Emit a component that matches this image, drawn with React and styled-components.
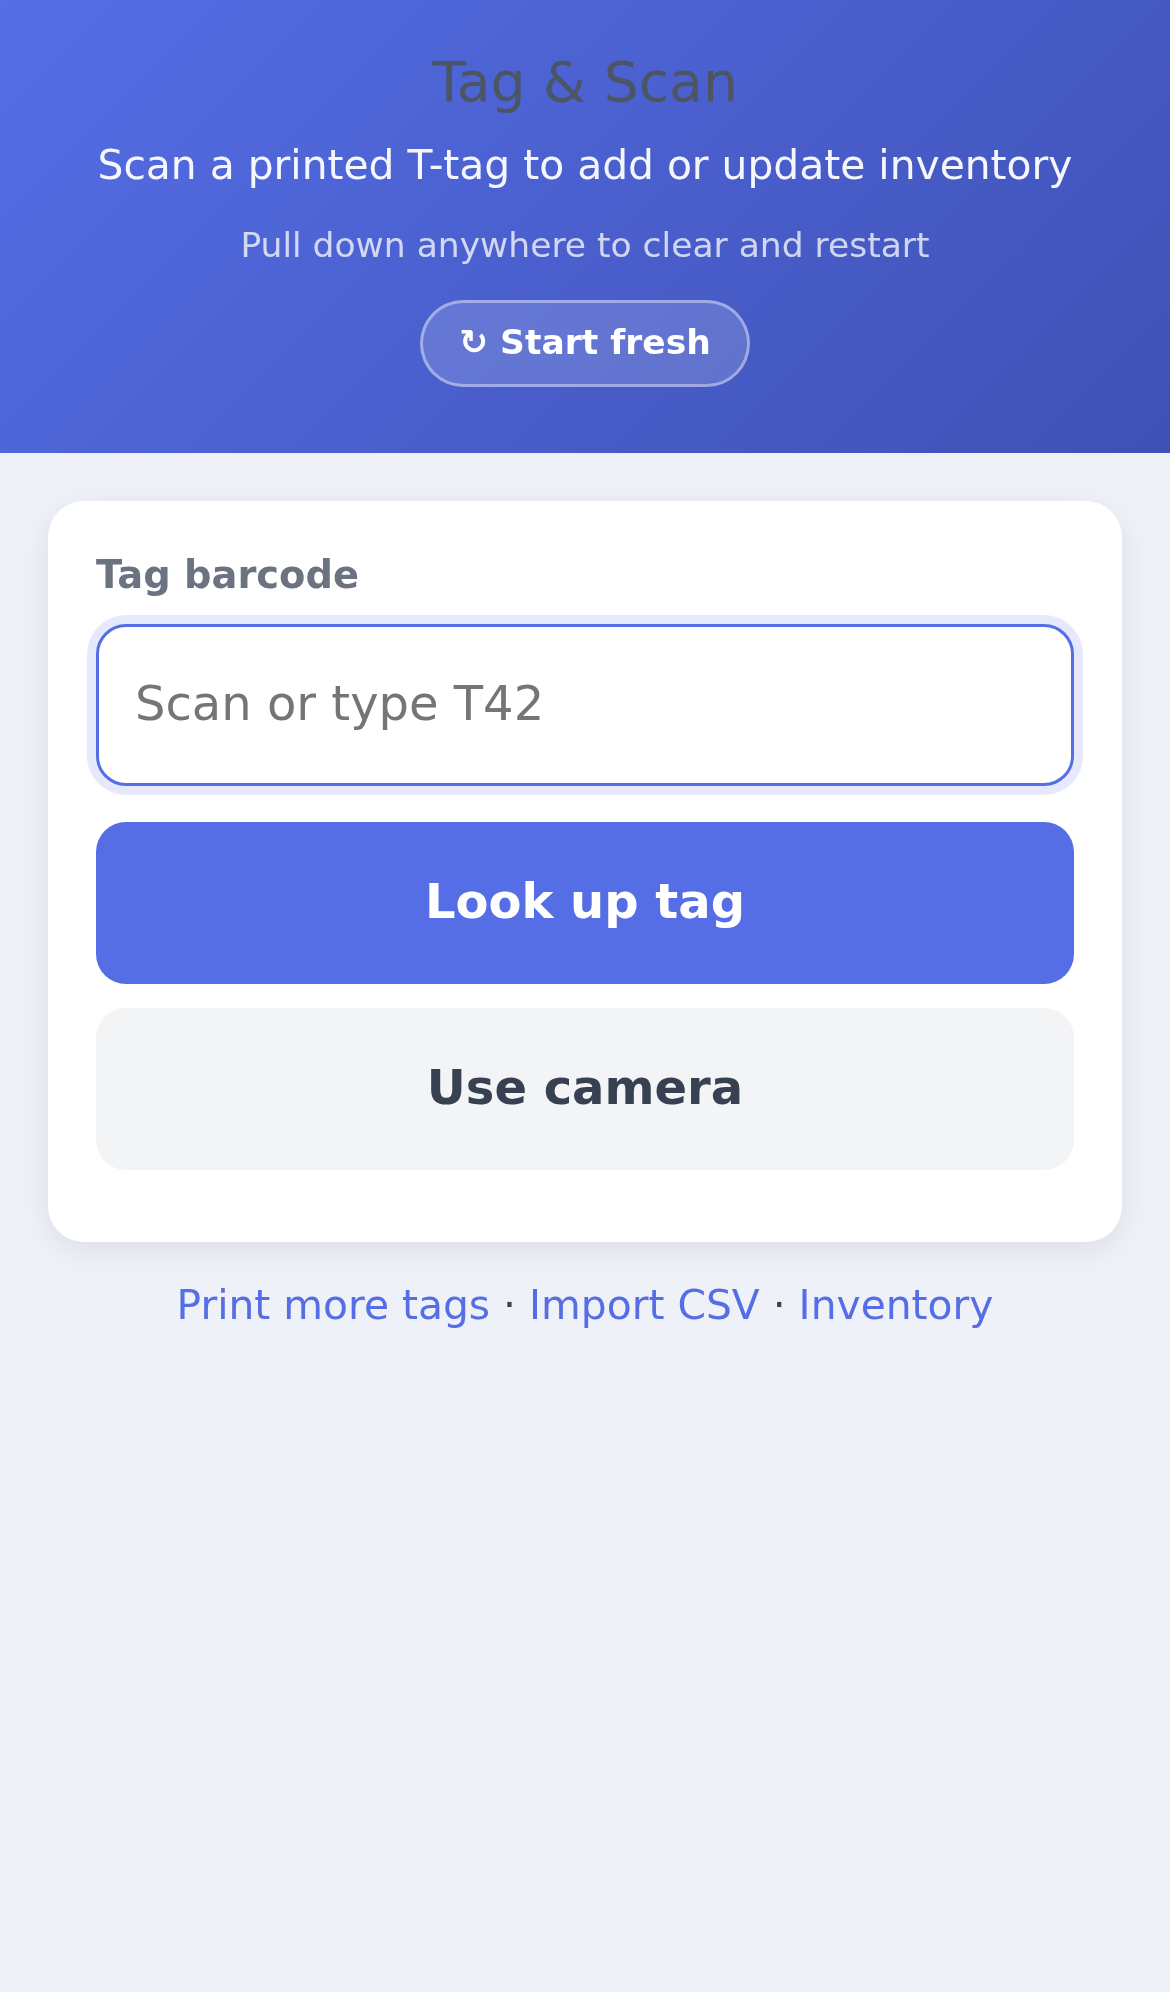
import React from 'react';
import styled, { createGlobalStyle } from 'styled-components';

const GlobalStyle = createGlobalStyle`
  * { box-sizing: border-box; }
  html, body { margin: 0; padding: 0; }
  body {
    background: #eef1f8;
    font-family: "DejaVu Sans", sans-serif;
    min-height: 1992px;
  }
  #root { will-change: transform; }
`;

const Header = styled.header`
  height: 453px;
  padding: 46px 24px 0;
  background: linear-gradient(135deg, #556ee6 0%, #3f51b5 100%);
  text-align: center;
  color: #fff;
`;

const Title = styled.h1`
  margin: 0 0 20px;
  font-size: 55.2px;
  line-height: 72px;
  font-weight: 400;
  color: #4b5563;
`;

const Subtitle = styled.p`
  margin: 0 0 29px;
  font-size: 40.8px;
  line-height: 54px;
  opacity: 0.95;
`;

const Hint = styled.p`
  margin: 0 0 31px;
  font-size: 34.5px;
  line-height: 48px;
  opacity: 0.75;
`;

const FreshButton = styled.button`
  height: 87px;
  padding: 0 36px 4px;
  border: 3px solid rgba(255, 255, 255, 0.4);
  border-radius: 45px;
  background: rgba(255, 255, 255, 0.15);
  color: #fff;
  font-family: inherit;
  font-size: 34.5px;
  font-weight: 700;
`;

const Main = styled.main`
  padding: 48px;
`;

const Card = styled.section`
  display: flex;
  flex-direction: column;
  padding: 48px 48px 72px;
  background: #fff;
  border-radius: 36px;
  box-shadow: 0 8px 32px rgba(0, 0, 0, 0.08);
`;

const Label = styled.label`
  margin-bottom: 24px;
  font-size: 38.4px;
  line-height: 51px;
  font-weight: 700;
  color: #6b7280;
`;

const Input = styled.input`
  width: 100%;
  height: 162px;
  margin-bottom: 36px;
  padding: 0 36px 5px;
  border: 3px solid #556ee6;
  border-radius: 30px;
  outline: none;
  box-shadow: 0 0 0 9px rgba(85, 110, 230, 0.15);
  font-family: inherit;
  font-size: 48px;
  &::placeholder { color: #757575; opacity: 1; }
`;

const ActionButton = styled.button`
  height: 162px;
  margin-top: ${(p) => (p.$secondary ? '24px' : '0')};
  padding: 0 0 5px;
  border: 0;
  border-radius: 30px;
  background: ${(p) => (p.$secondary ? '#f3f4f6' : '#556ee6')};
  color: ${(p) => (p.$secondary ? '#374151' : '#fff')};
  font-family: inherit;
  font-size: 48px;
  font-weight: 700;
`;

const Links = styled.nav`
  margin-top: 36px;
  text-align: center;
  font-size: 40.8px;
  line-height: 54px;
  color: #374151;
`;

const NavLink = styled.a`
  color: #556ee6;
  text-decoration: none;
`;

const App = () => (
  <>
    <GlobalStyle />
    <Header>
      <Title>Tag &amp; Scan</Title>
      <Subtitle>Scan a printed T-tag to add or update inventory</Subtitle>
      <Hint>Pull down anywhere to clear and restart</Hint>
      <FreshButton type="button">↻ Start fresh</FreshButton>
    </Header>
    <Main>
      <Card>
        <Label htmlFor="tag">Tag barcode</Label>
        <Input id="tag" placeholder="Scan or type T42" />
        <ActionButton type="button">Look up tag</ActionButton>
        <ActionButton type="button" $secondary>Use camera</ActionButton>
      </Card>
      <Links>
        <NavLink href="#print">Print more tags</NavLink> · <NavLink href="#csv">Import CSV</NavLink> · <NavLink href="#inventory">Inventory</NavLink>
      </Links>
    </Main>
  </>
);

export default App;
